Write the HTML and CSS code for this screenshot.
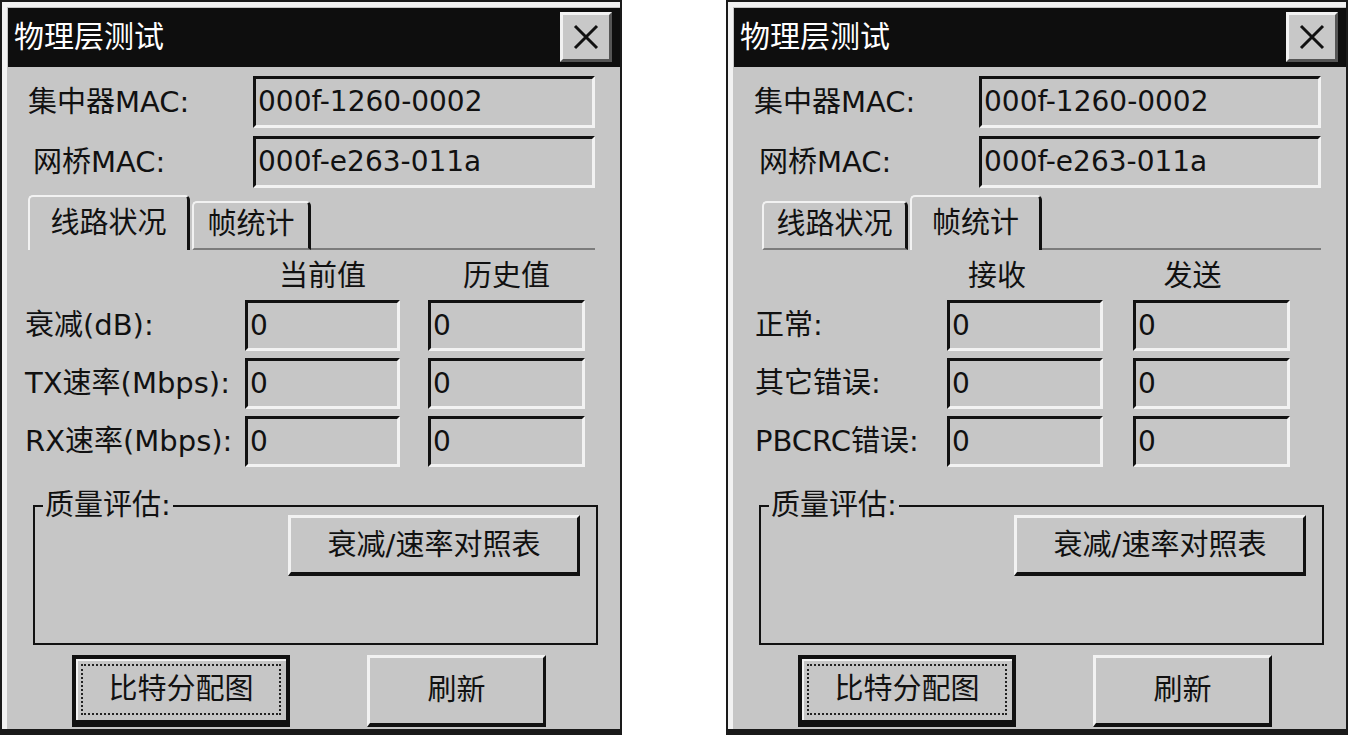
FILE: index.html
```html
<!DOCTYPE html>
<html lang="zh-CN">

<head>
    <meta charset="UTF-8">
    <meta name="viewport" content="width=device-width, initial-scale=1.0">
    <title>物理层测试</title>
    <link rel="stylesheet" href="styles.css">
</head>

<body>
    <div class="desktop">

        <!-- Ventana 1: pestaña "线路状况" -->
        <div class="window">
            <div class="titlebar">
                <span class="title">物理层测试</span>
                <button class="close">
                    <svg width="26" height="26" viewBox="0 0 26 26"><path d="M2 2 L24 24 M24 2 L2 24" stroke="#111" stroke-width="3" fill="none"/></svg>
                </button>
            </div>
            <div class="content">
                <div class="mac-row">
                    <span class="label">集中器MAC:</span>
                    <div class="field">000f-1260-0002</div>
                </div>
                <div class="mac-row mac-row-2">
                    <span class="label">网桥MAC:</span>
                    <div class="field">000f-e263-011a</div>
                </div>

                <div class="tabs">
                    <div class="tab tab-line active">线路状况</div>
                    <div class="tab tab-frame">帧统计</div>
                    <div class="tab-rest"></div>
                </div>

                <div class="stats">
                    <span></span>
                    <span class="col-head">当前值</span>
                    <span class="col-head">历史值</span>

                    <span class="label">衰减(dB):</span>
                    <div class="field">0</div>
                    <div class="field">0</div>

                    <span class="label">TX速率(Mbps):</span>
                    <div class="field">0</div>
                    <div class="field">0</div>

                    <span class="label">RX速率(Mbps):</span>
                    <div class="field">0</div>
                    <div class="field">0</div>
                </div>

                <div class="group">
                    <span class="group-title">质量评估:</span>
                    <button class="btn btn-table">衰减/速率对照表</button>
                </div>

                <div class="actions">
                    <button class="btn btn-default">比特分配图</button>
                    <button class="btn btn-refresh">刷新</button>
                </div>
            </div>
        </div>

        <!-- Ventana 2: pestaña "帧统计" -->
        <div class="window">
            <div class="titlebar">
                <span class="title">物理层测试</span>
                <button class="close">
                    <svg width="26" height="26" viewBox="0 0 26 26"><path d="M2 2 L24 24 M24 2 L2 24" stroke="#111" stroke-width="3" fill="none"/></svg>
                </button>
            </div>
            <div class="content">
                <div class="mac-row">
                    <span class="label">集中器MAC:</span>
                    <div class="field">000f-1260-0002</div>
                </div>
                <div class="mac-row mac-row-2">
                    <span class="label">网桥MAC:</span>
                    <div class="field">000f-e263-011a</div>
                </div>

                <div class="tabs">
                    <div class="tab tab-line">线路状况</div>
                    <div class="tab tab-frame active">帧统计</div>
                    <div class="tab-rest"></div>
                </div>

                <div class="stats stats-frame">
                    <span></span>
                    <span class="col-head head-recv">接收</span>
                    <span class="col-head head-send">发送</span>

                    <span class="label">正常:</span>
                    <div class="field">0</div>
                    <div class="field">0</div>

                    <span class="label">其它错误:</span>
                    <div class="field">0</div>
                    <div class="field">0</div>

                    <span class="label">PBCRC错误:</span>
                    <div class="field">0</div>
                    <div class="field">0</div>
                </div>

                <div class="group">
                    <span class="group-title">质量评估:</span>
                    <button class="btn btn-table">衰减/速率对照表</button>
                </div>

                <div class="actions">
                    <button class="btn btn-default">比特分配图</button>
                    <button class="btn btn-refresh">刷新</button>
                </div>
            </div>
        </div>

    </div>
</body>

</html>
```

FILE: styles.css
```css
/* Estilos generales */
* {
    box-sizing: border-box;
    margin: 0;
    padding: 0;
}

body {
    font-family: 'DejaVu Sans', 'Noto Sans CJK SC', sans-serif;
    font-size: 29px;
    color: #111;
    background-color: #fff;
}

.desktop {
    display: flex;
    gap: 104px;
}

/* Ventana */
.window {
    width: 622px;
    height: 735px;
    overflow: hidden;
    background-color: #c6c6c6;
    border: 2px solid #1a1a1a;
    border-bottom-width: 6px;
    box-shadow: inset 5px 5px 0 #f2f2f2;
    padding: 6px 0 0 6px;
}

.titlebar {
    height: 59px;
    background-color: #0e0e0e;
    display: flex;
    align-items: center;
    justify-content: space-between;
    padding: 0 8px 1px 6px;
}

.title {
    color: #fff;
    font-size: 30px;
    line-height: 1;
}

.close {
    width: 52px;
    height: 50px;
    background-color: #c8c8c8;
    border: 3px solid;
    border-color: #f2f2f2 #555 #555 #f2f2f2;
    display: flex;
    align-items: center;
    justify-content: center;
    margin-top: -1px;
}

.content {
    padding-right: 25px;
}

/* Campos hundidos */
.field {
    height: 100%;
    border: 3px solid;
    border-color: #111 #f2f2f2 #f2f2f2 #111;
    padding-left: 2px;
    display: flex;
    align-items: center;
    font-family: 'DejaVu Sans', sans-serif;
    font-size: 28px;
    line-height: 1;
}

.label {
    line-height: 1;
    white-space: nowrap;
}

.mac-row {
    display: grid;
    grid-template-columns: 245px 1fr;
    align-items: center;
    height: 52px;
    margin-top: 9px;
}

.mac-row .label {
    padding-left: 20px;
}

.mac-row-2 {
    margin-top: 8px;
}

.mac-row-2 .label {
    padding-left: 25px;
}

/* Pestañas */
.tabs {
    display: flex;
    align-items: flex-end;
    height: 55px;
    margin-top: 7px;
    padding-left: 28px;
}

.tab {
    height: 49px;
    border-top: 2px solid #f2f2f2;
    border-left: 2px solid #f2f2f2;
    border-right: 3px solid #111;
    border-bottom: 2px solid #7c7c7c;
    border-radius: 5px 5px 0 0;
    display: flex;
    align-items: center;
    justify-content: center;
    line-height: 1;
    padding-bottom: 2px;
}

.tab + .tab {
    margin-left: 2px;
}

.tab.active {
    height: 55px;
    border-bottom: none;
    padding-bottom: 0;
}

.tab.active:first-child {
    margin-left: -8px;
}

.tab-line {
    width: 146px;
}

.tab-line.active {
    width: 162px;
}

.tab-frame {
    width: 119px;
}

.tab-frame.active {
    width: 132px;
}

.tab-rest {
    flex: 1;
    height: 2px;
    background-color: #7c7c7c;
}

/* Tabla de valores */
.stats {
    display: grid;
    grid-template-columns: 209px 155px 157px;
    grid-template-rows: 33px 51px 51px 51px;
    column-gap: 28px;
    row-gap: 7px;
    align-items: center;
    margin-top: 10px;
}

.stats .label {
    padding-left: 17px;
}

.stats-frame {
    grid-template-columns: 183px 156px 157px;
    column-gap: 30px;
}

.stats-frame .label {
    padding-left: 21px;
}

.col-head {
    text-align: center;
    line-height: 1;
}

.head-recv {
    padding-right: 56px;
}

.head-send {
    padding-right: 38px;
}

/* Grupo "质量评估" */
.group {
    position: relative;
    width: 565px;
    height: 140px;
    margin: 38px 0 0 25px;
    border: 2px solid #111;
    display: flex;
    justify-content: flex-end;
    align-items: flex-start;
    padding: 8px 16px 0 0;
}

.group-title {
    position: absolute;
    top: -17px;
    left: 8px;
    padding: 0 2px;
    line-height: 30px;
    background-color: #c6c6c6;
}

/* Botones */
.btn {
    font-family: inherit;
    font-size: 29px;
    color: #111;
    line-height: 1;
    background-color: #c6c6c6;
    border: 3px solid;
    border-color: #f2f2f2 #111 #111 #f2f2f2;
    border-bottom-width: 4px;
}

.btn-table {
    width: 292px;
    height: 61px;
}

.actions {
    display: flex;
    gap: 77px;
    height: 72px;
    margin-top: 10px;
    padding-left: 64px;
}

.btn-default {
    position: relative;
    width: 218px;
    border: 4px solid #111;
    border-bottom-width: 7px;
    box-shadow: inset 2px 2px 0 #f2f2f2;
}

.btn-default::after {
    content: '';
    position: absolute;
    inset: 5px;
    border: 2px dotted #222;
}

.btn-refresh {
    width: 179px;
}
```
